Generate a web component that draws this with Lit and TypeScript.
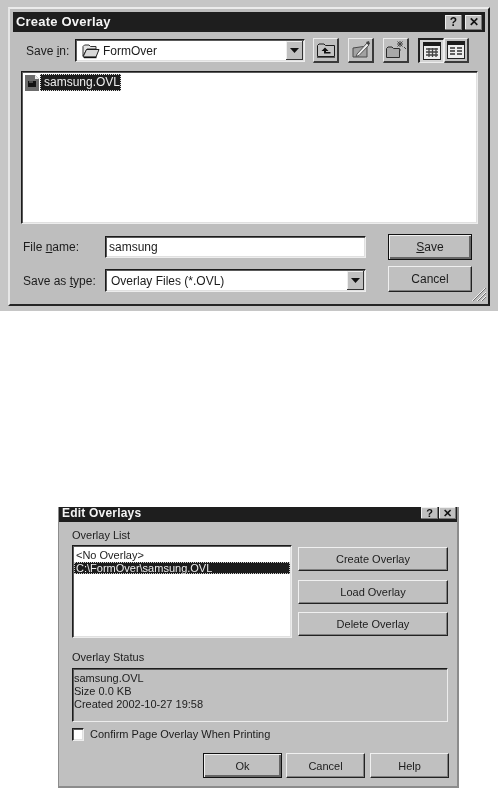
import { LitElement, html, css } from "lit";
import { customElement } from "lit/decorators.js";

const folderOpen = html`<svg class="ico" width="19" height="16" viewBox="0 0 19 16"><path d="M2 3.5 L3.5 2 H8 L9.5 3.5 H15 V6 H6 L2 13 Z" fill="#e4e4e4" stroke="#333"/><path d="M2 14 L5.5 6.5 H18 L15 14 Z" fill="#d8d8d8" stroke="#222"/><path d="M3 14.5 H15.5" stroke="#111" stroke-width="1.4"/></svg>`;
const arrow = html`<svg width="9" height="5" viewBox="0 0 9 5"><path d="M0 0 H9 L4.5 5 Z" fill="#111"/></svg>`;
const upIcon = html`<svg width="20" height="18" viewBox="0 0 20 18"><path d="M1.5 15.5 V4.5 L3 3 H8 L9.5 4.5 H18.5 V15.5 Z" fill="#c4c4c4" stroke="#1c1c1c"/><path d="M1 16.5 H19" stroke="#555"/><path d="M9 6.5 L5.5 10 H8 V12.5 H14.5 V11 H10 V10 H12.5 Z" fill="#111"/></svg>`;
const desktopIcon = html`<svg width="20" height="20" viewBox="0 0 20 20"><path d="M2 8 L16 6 V17 H2 Z" fill="#a2a2a2" stroke="#4a4a4a"/><path d="M6 14 L16 3 L18 5 L8 15.5 L5 16.5 Z" fill="#ececec" stroke="#555"/><path d="M15 2 L18 1 L19 4 L17 5 Z" fill="#444"/></svg>`;
const newIcon = html`<svg width="22" height="20" viewBox="0 0 22 20"><path d="M1.5 17.5 V8.5 L3 7 H7 L8.5 8.5 H14.5 V17.5 Z" fill="#a8a8a8" stroke="#2a2a2a"/><path d="M15 1 V7 M12 4 H18 M12.5 1.5 L17.5 6.5 M17.5 1.5 L12.5 6.5 M15 9 V11 M19 7 L21 9" stroke="#444"/></svg>`;
const listIcon = html`<svg width="18" height="18" viewBox="0 0 18 18"><rect x=".5" y=".5" width="17" height="17" fill="#eee" stroke="#222"/><rect x="0" y="0" width="18" height="4" fill="#1c1c1c"/><path d="M3 7 H15 M3 10 H15 M3 13 H15 M6 6 V15 M9.5 6 V15 M13 6 V15" stroke="#444" stroke-width="1.3"/></svg>`;
const detailIcon = html`<svg width="18" height="18" viewBox="0 0 18 18"><rect x=".5" y=".5" width="17" height="17" fill="#eee" stroke="#222"/><rect x="0" y="0" width="18" height="4" fill="#1c1c1c"/><path d="M3 7 H8 M10 7 H15 M3 10 H8 M10 10 H15 M3 13 H8 M10 13 H15" stroke="#333" stroke-width="1.4"/></svg>`;
const fileIcon = html`<svg width="14" height="16" viewBox="0 0 14 16"><path d="M0 0 H10 L14 4 V16 H0 Z" fill="#6c6c6c"/><path d="M10 0 L14 4 H10 Z" fill="#eee"/><rect x="3" y="6" width="8" height="6" fill="#111"/><path d="M4 7 H8" stroke="#888"/></svg>`;
const grip = html`<svg class="grip" width="14" height="13" viewBox="0 0 14 13"><path d="M13 0 L0 13 M14 4 L5 13 M14 8 L9 13" stroke="#f2f2f2"/><path d="M14 0 L1 13 M14 5 L6 13 M14 9 L10 13" stroke="#6f6f6f"/></svg>`;

@customElement("app-root")
export class AppRoot extends LitElement {
  static styles = css`
    :host { display: block; width: 499px; height: 789px; background: #fff; overflow: hidden;
      font: 12px/14px "Liberation Sans", Arial, sans-serif; color: #1c1c1c; }
    .soft { filter: grayscale(1) blur(0.45px); height: 789px; }
    u { text-underline-offset: 1px; }

    .frame { height: 311px; width: 498px; box-sizing: border-box; padding: 7px 8px 5px 8px; background: #c6c6c6; }
    .win { position: relative; height: 299px; box-sizing: border-box; background: #bebebe;
      border-top: 2px solid #ececec; border-left: 2px solid #e6e6e6; border-right: 2px solid #1c1c1c; border-bottom: 2px solid #262626;
      padding: 3px 3px 0 3px; }
    .title { height: 20px; background: #1e1e1e; color: #f4f4f4; font-weight: 700; font-size: 13px; line-height: 20px;
      letter-spacing: .2px; padding: 0 3px 0 3px; display: flex; align-items: center; justify-content: space-between; overflow: hidden; }
    .caps { display: flex; gap: 3px; }
    .cap { width: 17px; height: 15px; background: #c0c0c0; color: #111; display: flex; align-items: center; justify-content: center;
      font-size: 12px; font-weight: 700; letter-spacing: 0; box-shadow: inset -1px -1px 0 #777, inset 1px 1px 0 #eee; }

    .bar { display: flex; align-items: center; height: 25px; margin-top: 6px; padding-left: 13px; }
    .bar .lbl { width: 49px; }
    .sunken { box-sizing: border-box; background: #fff; border-top: 1px solid #1c1c1c; border-left: 1px solid #1c1c1c;
      border-right: 1px solid #ededed; border-bottom: 1px solid #ededed; box-shadow: inset 1px 1px 0 #5a5a5a, inset -1px -1px 0 #e0e0e0;
      display: flex; align-items: center; position: relative; }
    .combo { width: 230px; height: 23px; padding-left: 5px; gap: 3px; }
    .ico { flex: none; }
    .drop { position: absolute; right: 1px; top: 1px; bottom: 1px; width: 17px; background: #c0c0c0; display: flex; align-items: center; justify-content: center;
      box-shadow: inset -1px -1px 0 #333, inset 1px 1px 0 #eee; }
    .tool { box-sizing: border-box; width: 26px; height: 25px; background: #c0c0c0; display: flex; align-items: center; justify-content: center;
      border-top: 1px solid #ececec; border-left: 1px solid #ececec; border-right: 2px solid #3a3a3a; border-bottom: 2px solid #3a3a3a; }
    .t1 { margin-left: 8px; }
    .t2 { margin-left: 9px; }
    .t3 { margin-left: 9px; }
    .pressed { margin-left: 9px; border-top: 2px solid #222; border-left: 2px solid #222; border-right: 1px solid #eee; border-bottom: 1px solid #eee;
      background: #d4d4d4; }
    .t5 { width: 25px; }

    .files { margin: 8px 0 0 8px; width: 457px; height: 153px; align-items: flex-start; padding: 2px 0 0 3px; gap: 1px; }
    .sel { background: #1c1c1c; color: #eee; outline: 1px dotted #ddd; outline-offset: -1px; padding: 0 1px 0 4px; height: 17px; line-height: 17px; font-size: 12px; }
    .fileitem { display: flex; align-items: center; gap: 1px; }

    .form { display: grid; grid-template-columns: 82px 261px 84px; margin: 10px 0 0 10px; align-items: center; }
    .input { height: 22px; padding-left: 3px; }
    .btn { box-sizing: border-box; background: #c0c0c0; display: flex; align-items: center; justify-content: center; font: inherit;
      color: #1c1c1c; padding: 0; border-top: 1px solid #f0f0f0; border-left: 1px solid #f0f0f0; border-right: 1px solid #222; border-bottom: 1px solid #222;
      box-shadow: inset -1px -1px 0 #808080; }
    .def { border: 1px solid #111; box-shadow: inset 1px 1px 0 #f0f0f0, inset -2px -2px 0 #666; }
    .form .btn { margin-left: 22px; width: 84px; }
    .b1 { height: 26px; }
    .form .b2 { height: 26px; margin-top: 6px; }
    .l2, .i2 { margin-top: 9px; }
    .i2 { height: 23px; padding-left: 5px; }
    .grip { position: absolute; right: 2px; bottom: 3px; }

    .edit { position: relative; margin: 196px 0 0 58px; width: 401px; height: 281px; box-sizing: border-box; background: #c0c0c0;
      border-left: 1px solid #8c8c8c; border-right: 2px solid #8c8c8c; border-bottom: 2px solid #8c8c8c; font-size: 11px; }
    .etitle { height: 15px; background: #1e1e1e; color: #f4f4f4; font-weight: 700; font-size: 12px; line-height: 12px; letter-spacing: .2px;
      padding: 0 1px 0 3px; display: flex; justify-content: space-between; }
    .etitle .caps { gap: 1px; }
    .etitle .cap { height: 12px; width: 17px; font-size: 11px; line-height: 12px; }
    .ebody { padding: 6px 9px 0 13px; }
    .cap-lbl { height: 14px; line-height: 14px; margin-bottom: 3px; }
    .top { display: flex; gap: 6px; }
    .olist { width: 220px; height: 93px; flex-direction: column; align-items: stretch; padding-top: 3px; }
    .row { height: 13px; line-height: 13px; padding-left: 3px; }
    .rsel { background: #1c1c1c; color: #eee; outline: 1px dotted #ccc; outline-offset: -1px; height: 12px; line-height: 12px; margin: 0 1px; padding-left: 2px; }
    .side { display: flex; flex-direction: column; gap: 8.5px; padding-top: 2px; width: 150px; }
    .side .btn { height: 24px; }
    .sec2 { margin-top: 12px; margin-bottom: 4px; }
    .status { background: transparent; height: 54px; display: block; padding: 3px 0 0 1px; line-height: 13px; box-shadow: inset 1px 1px 0 #5a5a5a; }
    .check { display: flex; align-items: center; height: 14px; margin-top: 5px; gap: 6px; }
    .box { width: 12px; height: 13px; }
    .actions { display: flex; justify-content: flex-end; gap: 4px; margin: 12px -1px 0 0; }
    .actions .btn { width: 79px; height: 25px; }
    .actions .help { margin-left: 1px; }
  `;

  render() {
    return html`<div class="soft">
      <div class="frame"><div class="win">
        <div class="title"><span>Create Overlay</span>
          <span class="caps"><span class="cap">?</span><span class="cap">✕</span></span></div>
        <div class="bar">
          <span class="lbl">Save <u>i</u>n:</span>
          <div class="sunken combo">${folderOpen}<span>FormOver</span><span class="drop">${arrow}</span></div>
          <span class="tool t1">${upIcon}</span>
          <span class="tool t2">${desktopIcon}</span>
          <span class="tool t3">${newIcon}</span>
          <span class="tool pressed">${listIcon}</span>
          <span class="tool t5">${detailIcon}</span>
        </div>
        <div class="sunken files"><div class="fileitem">${fileIcon}<span class="sel">samsung.OVL</span></div></div>
        <div class="form">
          <span>File <u>n</u>ame:</span>
          <div class="sunken input">samsung</div>
          <button class="btn def b1"><span><u>S</u>ave</span></button>
          <span class="l2">Save as <u>t</u>ype:</span>
          <div class="sunken input i2">Overlay Files (*.OVL)<span class="drop">${arrow}</span></div>
          <button class="btn b2">Cancel</button>
        </div>
        ${grip}
      </div></div>

      <div class="edit">
        <div class="etitle"><span>Edit Overlays</span>
          <span class="caps"><span class="cap">?</span><span class="cap">✕</span></span></div>
        <div class="ebody">
          <div class="cap-lbl">Overlay List</div>
          <div class="top">
            <div class="sunken olist">
              <div class="row">&lt;No Overlay&gt;</div>
              <div class="row rsel">C:\\FormOver\\samsung.OVL</div>
            </div>
            <div class="side">
              <button class="btn">Create Overlay</button>
              <button class="btn">Load Overlay</button>
              <button class="btn">Delete Overlay</button>
            </div>
          </div>
          <div class="cap-lbl sec2">Overlay Status</div>
          <div class="sunken status">samsung.OVL<br />Size 0.0 KB<br />Created 2002-10-27 19:58</div>
          <div class="check"><span class="sunken box"></span><span>Confirm Page Overlay When Printing</span></div>
          <div class="actions">
            <button class="btn def">Ok</button>
            <button class="btn">Cancel</button>
            <button class="btn help">Help</button>
          </div>
        </div>
      </div>
    </div>`;
  }
}
